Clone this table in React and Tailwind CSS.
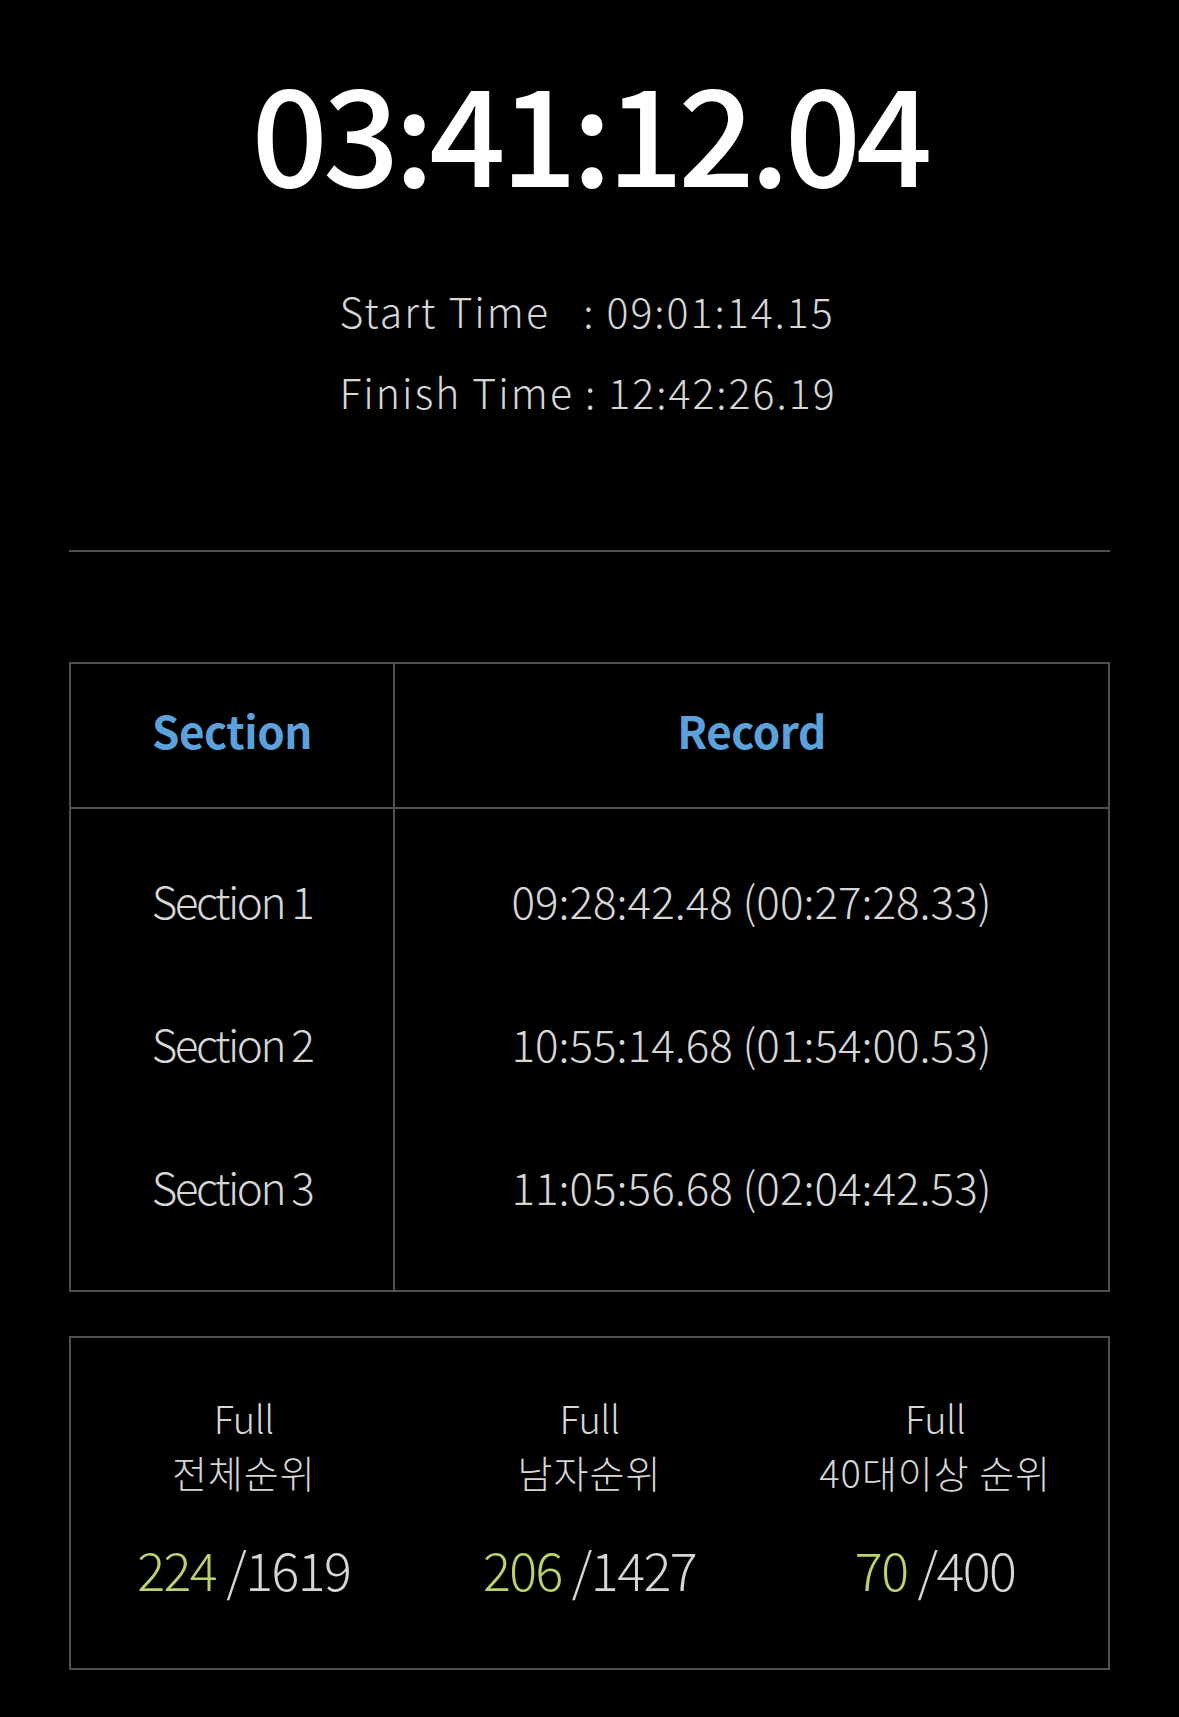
export default function App() {
  const font = { fontFamily: '"Noto Sans CJK KR", "Noto Sans", sans-serif' };
  const rows = [
    ["Section 1", "09:28:42.48 (00:27:28.33)"],
    ["Section 2", "10:55:14.68 (01:54:00.53)"],
    ["Section 3", "11:05:56.68 (02:04:42.53)"],
  ];
  const ranks = [
    ["전체순위", "224", "1619"],
    ["남자순위", "206", "1427"],
    ["40대이상 순위", "70", "400"],
  ];
  return (
    <div className="min-h-[1717px] w-full bg-black text-[#d6d6d6] px-[69px] pt-[62px]" style={font}>
      <div className="text-center text-white font-medium text-[134px] leading-[1] tracking-[-5px]">03:41:12.04</div>
      <div className="mt-[74px] flex flex-col items-center text-[41px] leading-[81px] font-light tracking-[2px]">
        <div className="whitespace-pre w-[500px]">Start Time   : 09:01:14.15</div>
        <div className="whitespace-pre w-[500px]">Finish Time : 12:42:26.19</div>
      </div>
      <div className="mt-[118px] h-[2px] bg-[#505050]" />
      <div className="mt-[110px] border-2 border-[#505050]">
        <div className="flex h-[145px] border-b-2 border-[#505050]">
          <div className="w-[324px] border-r-2 border-[#505050] pb-[12px] flex items-center justify-center text-[#5ba2dd] font-bold text-[44px] tracking-[-0.5px]">Section</div>
          <div className="flex-1 pb-[12px] flex items-center justify-center text-[#5ba2dd] font-bold text-[44px] tracking-[-0.5px]">Record</div>
        </div>
        <div className="flex">
          <div className="w-[324px] border-r-2 border-[#505050] pt-[19px] pb-[33px]">
            {rows.map((r) => (
              <div key={r[0]} className="h-[143px] flex items-center justify-center text-[44px] tracking-[-2.5px] font-light">{r[0]}</div>
            ))}
          </div>
          <div className="flex-1 pt-[19px] pb-[33px]">
            {rows.map((r) => (
              <div key={r[1]} className="h-[143px] flex items-center justify-center text-[44px] tracking-[0px] font-light">{r[1]}</div>
            ))}
          </div>
        </div>
      </div>
      <div className="mt-[44px] border-2 border-[#505050] h-[334px] grid grid-cols-3 pt-[53px]">
        {ranks.map((r) => (
          <div key={r[0]} className="flex flex-col items-center">
            <div className="text-[38px] leading-[54px] tracking-[-0.5px] font-light">Full</div>
            <div className="text-[38px] leading-[54px] tracking-[1px] font-light">{r[0]}</div>
            <div className="mt-[40px] text-[52px] leading-[60px] tracking-[-1.5px] font-light">
              <span className="text-[#b8d46b]">{r[1]}</span> /{r[2]}
            </div>
          </div>
        ))}
      </div>
    </div>
  );
}
